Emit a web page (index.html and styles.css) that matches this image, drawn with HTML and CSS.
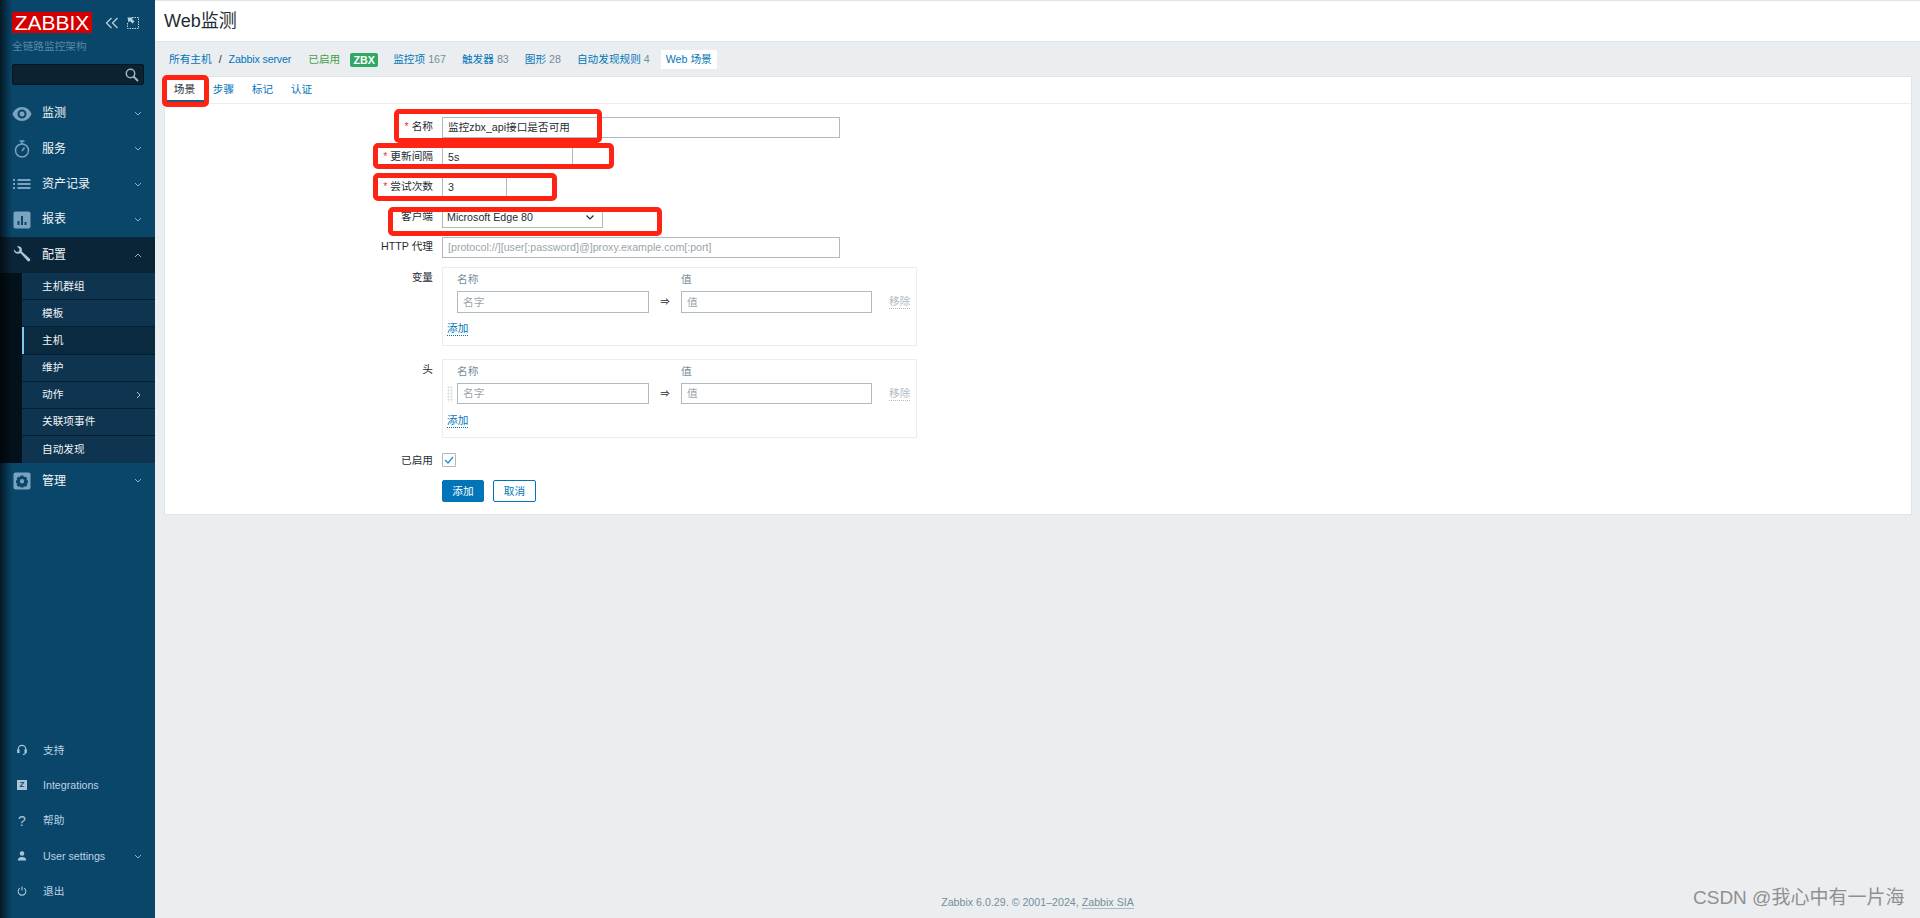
FILE: index.html
```html
<!DOCTYPE html>
<html lang="zh-CN">
<head>
<meta charset="utf-8">
<title>Web监测</title>
<link rel="stylesheet" href="styles.css">
</head>
<body>
<div class="app">
  <aside class="sidebar">
    <div class="brand">
      <span class="logo">ZABBIX</span>
      <svg class="brand-ic" width="14" height="14" viewBox="0 0 14 14" fill="none" stroke="#b9d0de" stroke-width="1.3"><path d="M6.5 2 1.5 7l5 5M12.5 2l-5 5 5 5"/></svg>
      <svg class="brand-ic" width="12" height="12" viewBox="0 0 12 12" fill="none" stroke="#b9d0de" stroke-width="1" stroke-dasharray="1.5 1"><path d="M5 .5h6.500v11H.5V6"/><path d="M.5.5h6l-1.500 1.500 2.500 2.500-2 2L3 4 1.500 5.500z" fill="#b9d0de" stroke="none"/></svg>
    </div>
    <div class="slogan">全链路监控架构</div>
    <div class="search">
      <svg width="14" height="14" viewBox="0 0 14 14" fill="none" stroke="#9fb6c4" stroke-width="1.5"><circle cx="5.500" cy="5.500" r="4.200"/><path d="m8.500 8.500 4.500 4.500" stroke-width="2"/></svg>
    </div>
    <nav class="nav">
      <a class="item"><svg class="ic" viewBox="0 0 20 14"><path fill="#7ba3bd" fill-rule="evenodd" d="M10 0c4.500 0 8 3.200 9.500 7-1.500 3.800-5 7-9.500 7S2 10.800.5 7C2 3.200 5.500 0 10 0zm0 2.500a4.500 4.500 0 1 0 0 9 4.500 4.500 0 0 0 0-9zm0 2a2.500 2.500 0 1 1 0 5 2.500 2.500 0 0 1 0-5z"/></svg><span class="t">监测</span><svg class="chev" viewBox="0 0 8 5"><path d="m1 1 3 3 3-3"/></svg></a>
      <a class="item"><svg class="ic" viewBox="0 0 20 18" fill="none" stroke="#7ba3bd" stroke-width="1.500"><circle cx="10" cy="10.500" r="6.500"/><path d="M7.500 1h5M10 1v3M10 11l2.500-3.500"/></svg><span class="t">服务</span><svg class="chev" viewBox="0 0 8 5"><path d="m1 1 3 3 3-3"/></svg></a>
      <a class="item"><svg class="ic" viewBox="0 0 20 12" fill="none" stroke="#7ba3bd" stroke-width="1.800"><path d="M1 2h2M5.500 2h13M1 6h2M5.500 6h13M1 10h2M5.500 10h13"/></svg><span class="t">资产记录</span><svg class="chev" viewBox="0 0 8 5"><path d="m1 1 3 3 3-3"/></svg></a>
      <a class="item"><svg class="ic" viewBox="0 0 18 18"><rect width="17" height="17" x=".5" y=".5" rx="2" fill="#7ba3bd"/><path fill="#0a466a" d="M4.500 10h2v4h-2zM8 5h2v9H8zM11.500 11h2v3h-2z"/></svg><span class="t">报表</span><svg class="chev" viewBox="0 0 8 5"><path d="m1 1 3 3 3-3"/></svg></a>
      <a class="item open"><svg class="ic" viewBox="0 0 18 18"><path fill="#a9c6d9" d="M1 3.500 3.500 6 6 5.500 6.500 3 4 .6C6.500-.4 9 1 9 4c0 .6-.1 1-.2 1.400l8 7.300c1.300 1.300-.8 3.700-2.200 2.300L7.600 7.200C4 8.700.2 6.500 1 3.500z"/></svg><span class="t">配置</span><svg class="chev" viewBox="0 0 8 5"><path d="m1 4 3-3 3 3"/></svg></a>
      <div class="sub">
        <a class="si">主机群组</a>
        <a class="si">模板</a>
        <a class="si cur">主机</a>
        <a class="si">维护</a>
        <a class="si">动作<svg class="chev-r" viewBox="0 0 5 8"><path d="m1 1 3 3-3 3"/></svg></a>
        <a class="si">关联项事件</a>
        <a class="si">自动发现</a>
      </div>
      <a class="item"><svg class="ic" viewBox="0 0 18 18"><rect width="17" height="17" x=".5" y=".5" rx="2" fill="#7ba3bd"/><path fill="#0a466a" fill-rule="evenodd" d="m7.500 3.500h3l.4 1.700 1.500-.8 2 2-.9 1.500 1.500.6v2.500l-1.500.4.900 1.500-2 2-1.500-.9-.4 1.500h-3l-.4-1.500-1.500.9-2-2 .9-1.500-1.500-.4V8.500l1.500-.6-.9-1.500 2-2 1.500.8zM9 7a2.200 2.200 0 1 0 0 4.400A2.200 2.200 0 0 0 9 7z"/></svg><span class="t">管理</span><svg class="chev" viewBox="0 0 8 5"><path d="m1 1 3 3 3-3"/></svg></a>
    </nav>
    <div class="bottom">
      <a class="bi"><svg class="bic" viewBox="0 0 12 13" fill="none" stroke="#a9c6d9" stroke-width="1.400"><path d="M1.500 8V5.500a4.500 4.500 0 0 1 9 0V8"/><path d="M7 12c2 0 3-.5 3.400-2"/><rect x="1" y="6.500" width="1.300" height="3" fill="#a9c6d9"/><rect x="9.700" y="6.500" width="1.300" height="3" fill="#a9c6d9"/></svg><span>支持</span></a>
      <a class="bi"><span class="zbox">Z</span><span>Integrations</span></a>
      <a class="bi"><span class="q">?</span><span>帮助</span></a>
      <a class="bi"><svg class="bic" viewBox="0 0 12 12"><circle cx="6" cy="3" r="2.700" fill="#a9c6d9"/><path fill="#a9c6d9" d="M1 11.500c0-3 2-4.300 5-4.300s5 1.300 5 4.300z"/></svg><span>User settings</span><svg class="chev" viewBox="0 0 8 5"><path d="m1 1 3 3 3-3"/></svg></a>
      <a class="bi"><svg class="bic" viewBox="0 0 12 12" fill="none" stroke="#a9c6d9" stroke-width="1.300"><path d="M3.500 2.500a4.600 4.600 0 1 0 5 0M6 .5v5"/></svg><span>退出</span></a>
    </div>
  </aside>
  <main class="main">
    <header class="head"><h1>Web监测</h1></header>
    <div class="crumbs">
      <a class="c c1">所有主机</a><span class="sep">/</span><a class="c c2">Zabbix server</a>
      <span class="on">已启用</span><span class="zbx">ZBX</span>
      <a class="c c3">监控项<i> 167</i></a><a class="c c3">触发器<i> 83</i></a><a class="c c3">图形<i> 28</i></a><a class="c c3">自动发现规则<i> 4</i></a>
      <a class="c cur">Web 场景</a>
    </div>
    <section class="card">
      <div class="tabs">
        <a class="tab act">场景</a><a class="tab">步骤</a><a class="tab">标记</a><a class="tab">认证</a>
      </div>
      <form class="form">
        <div class="row"><label class="lab"><b>*</b> 名称</label><div class="inp w398">监控zbx_api接口是否可用</div></div>
        <div class="row"><label class="lab"><b>*</b> 更新间隔</label><div class="inp w131">5s</div></div>
        <div class="row"><label class="lab"><b>*</b> 尝试次数</label><div class="inp w65">3</div></div>
        <div class="row"><label class="lab">客户端</label><div class="inp sel">Microsoft Edge 80<svg class="selc" viewBox="0 0 8 5"><path d="m.5.5 3.500 3.500L7.500.5"/></svg></div></div>
        <div class="row"><label class="lab">HTTP 代理</label><div class="inp w398 ph">[protocol://][user[:password]@]proxy.example.com[:port]</div></div>
        <div class="row top"><label class="lab">变量</label>
          <div class="box">
            <div class="bh"><span class="bhn">名称</span><span>值</span></div>
            <div class="br"><div class="inp bin ph">名字</div><span class="arr">⇒</span><div class="inp bin2 ph">值</div><a class="rm">移除</a></div>
            <a class="add">添加</a>
          </div>
        </div>
        <div class="row top last"><label class="lab">头</label>
          <div class="box">
            <div class="bh"><span class="bhn">名称</span><span>值</span></div>
            <div class="br"><span class="drag"></span><div class="inp bin ph">名字</div><span class="arr">⇒</span><div class="inp bin2 ph">值</div><a class="rm">移除</a></div>
            <a class="add">添加</a>
          </div>
        </div>
        <div class="row chk"><label class="lab">已启用</label><span class="cb"><svg viewBox="0 0 10 8" width="10" height="8" fill="none" stroke="#1f8ad0" stroke-width="1.200"><path d="m1 4 3 3 5-6"/></svg></span></div>
        <div class="row btns"><span class="lab"></span><span class="btn pri">添加</span><span class="btn alt">取消</span></div>
      </form>
    </section>
    <footer class="foot">Zabbix 6.0.29. © 2001–2024, <a>Zabbix SIA</a></footer>
  </main>
</div>
<div class="mark m1"></div>
<div class="mark m2"></div>
<div class="mark m3"></div>
<div class="mark m4"></div>
<div class="mark m5"></div>
<div class="wm">CSDN @我心中有一片海</div>
</body>
</html>
```
FILE: styles.css
```css
*{box-sizing:border-box}
html,body{margin:0;height:100%}
body{font:10.67px/1.2 "Liberation Sans","Noto Sans CJK SC",sans-serif;color:#1f2c33;background:#ebeef0;overflow:hidden;position:relative}
a{color:inherit;text-decoration:none}
.app{display:flex;height:918px}
.sidebar{width:155px;flex:none;background:#0a466a;display:flex;flex-direction:column;position:relative}
.sidebar::before{content:"";position:absolute;inset:0 auto 0 0;width:12px;background:linear-gradient(90deg,rgba(0,0,0,.65),rgba(0,0,0,0));pointer-events:none;z-index:1}
.brand{display:flex;align-items:center;padding:12px 0 0 12px;height:33px}
.logo{display:block;width:80px;height:21px;background:#d40000;color:#fff;font-size:21px;line-height:21px;text-align:center;flex:none}
.brand-ic{margin-left:13px;flex:none}
.brand-ic + .brand-ic{margin-left:8px}
.slogan{margin:7px 0 0 12px;color:#5b87a3;height:13px;line-height:13px;white-space:nowrap;font-size:10.670px}
.search{margin:11px 0 0 12px;width:132px;height:21px;background:#0b2231;border:1px solid #06151f;border-radius:2px;display:flex;justify-content:flex-end;align-items:center;padding-right:4px}
.nav{margin-top:11px}
.item{display:flex;align-items:center;height:35.300px;padding:0 13px 0 12px;color:#f2f5f7;font-size:12px}
.item .t{flex:1}
.ic{width:20px;height:18px;margin-right:10px;flex:none}
.chev{width:8px;height:5px;fill:none;stroke:#8fb0c5;stroke-width:1;flex:none}
.item.open{background:#0a2538;height:36px}
.sub{background:#03111a;padding-left:22px}
.si{display:flex;align-items:center;justify-content:space-between;height:27.140px;padding:0 14px 0 20px;background:#0e3450;color:#f2f5f7;border-bottom:1px solid #061f30}
.si:last-child{border-bottom:0}
.si.cur{background:#0a2a40;box-shadow:inset 2px 0 0 #7fc6f0}
.chev-r{width:5px;height:8px;fill:none;stroke:#b0c6d4;stroke-width:1}
.bottom{margin-top:auto;padding:0 13px 9px 0}
.bi{display:flex;align-items:center;height:35.300px;color:#bcd3e2;padding-left:17px}
.bi>span:nth-child(2){flex:1;margin-left:16px}
.bic{width:10px;height:12px;flex:none}
.zbox{width:10px;height:10px;background:#a9c6d9;color:#0a466a;font:bold 8px/10px "Liberation Sans",sans-serif;text-align:center;flex:none}
.q{width:10px;font-size:14px;line-height:14px;text-align:center;flex:none;color:#a9c6d9}
.main{flex:1;min-width:0;display:flex;flex-direction:column;border-top:1px solid #dfe4e7}
.head{height:41px;background:#fff;border-bottom:1px solid #dfe4e7;padding:2px 0 0 9px;display:flex;align-items:center;flex:none}
h1{margin:0;font-size:18px;font-weight:400;color:#1f2c33}
.crumbs{display:flex;align-items:center;height:34px;padding:1px 0 0 14px;color:#0275b8;flex:none}
.c i{font-style:normal;color:#768d99}
.sep{margin:0 7px;color:#1f2c33}
.c2{margin-right:17px;letter-spacing:-.15px}
.on{color:#429e47;margin-right:10px}
.zbx{background:#2fa866;color:#fff;font-weight:700;font-size:10.670px;border-radius:2px;margin-right:15px;width:28px;height:14px;line-height:14px;text-align:center}
.c3{margin-right:16px}
.c.cur{background:#fff;padding:3px 5px;margin-left:-5px}
.card{margin:0 8px 0 9px;height:439px;background:#fff;border:1px solid #dfe4e7;flex:none}
.tabs{display:flex;align-items:flex-start;height:27px;border-bottom:1px solid #ebeef0}
.tab{padding-top:6px;height:25px;color:#0275b8;width:39px;text-align:center;white-space:nowrap}
.tab.act{color:#1f2c33;border-bottom:2px solid #2a5a80}
.form{padding:13px 0 0}
.row{display:flex;gap:9px;margin-bottom:9px;align-items:flex-start}
.lab{width:268px;text-align:right;flex:none;padding-top:3px}
.lab b{color:#e33734;font-weight:400}
.inp{height:21px;border:1px solid #acbbc2;background:#fff;padding:0 5px;line-height:19px;white-space:nowrap;color:#1f2c33}
.w398{width:398px}.w131{width:131px}.w65{width:65px}
.ph{color:#9aa5ab}
.sel{width:161px;padding:0 4px;display:flex;justify-content:space-between;align-items:center;line-height:1}
.selc{width:8px;height:5px;fill:none;stroke:#1f2c33;stroke-width:1.200;margin-right:4px}
.top{margin-bottom:13px}
.top.last{margin-bottom:15px}
.top .lab{padding-top:4px}
.box{width:475px;height:79px;border:1px solid #ebeef0;padding:5px 0 0 14px}
.bh{color:#768d99;display:flex;height:13px;line-height:13px}
.bhn{width:224px}
.br{display:flex;align-items:flex-start;height:22px;margin-top:5px;position:relative}
.bin{width:192px;height:22px;line-height:20px}
.bin2{width:191px;height:22px;line-height:20px}
.last .bin,.last .bin2{height:21px;line-height:19px}
.arr{width:32px;height:21px;line-height:21px;text-align:center;font-size:9.500px;color:#1f2c33}
.rm{margin:4px 0 0 17px;color:#aebcc4;border-bottom:1px dotted #aebcc4;line-height:13px}
.add{display:inline-block;margin:9px 0 0 -10px;color:#0275b8;border-bottom:1px dotted #0275b8;line-height:13px}
.drag{position:absolute;left:-10px;top:3px;width:6px;height:16px;background:radial-gradient(circle,#e4e8ea 1px,transparent 1.200px) 0 0/3px 3px}
.chk{align-items:center;margin-bottom:13px}
.chk .lab{padding-top:0}
.cb{width:14px;height:14px;border:1px solid #acbbc2;border-radius:1px;display:flex;align-items:center;justify-content:center}
.btns{margin:0;gap:0}
.btns .lab{margin-right:9px}
.btn{height:22px;line-height:20px;text-align:center;border:1px solid #0275b8;border-radius:2px}
.pri{width:42px;background:#0275b8;color:#fff}
.alt{width:43px;margin-left:9px;color:#0275b8;background:#fff}
.foot{margin-top:auto;height:30px;text-align:center;color:#768d99;line-height:28px;font-size:10.670px}
.foot a{border-bottom:1px solid #acbbc2}
.mark{position:absolute;border:5px solid #ff2314;border-radius:5px;pointer-events:none}
.m1{left:162px;top:75px;width:47px;height:32px}
.m2{left:394px;top:109px;width:208px;height:34px}
.m3{left:373px;top:143px;width:241px;height:26px}
.m4{left:373px;top:173px;width:184px;height:28px}
.m5{left:388px;top:207px;width:274px;height:29px}
.wm{position:absolute;left:1693px;top:887px;font-size:19px;line-height:22px;color:#909090;white-space:nowrap}
```
